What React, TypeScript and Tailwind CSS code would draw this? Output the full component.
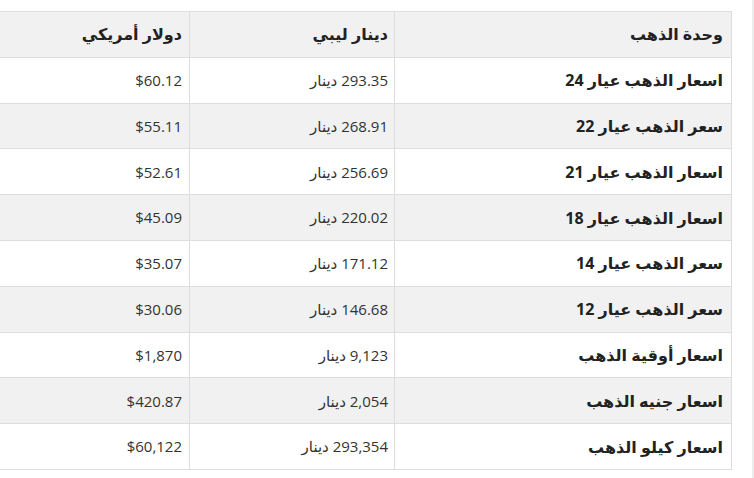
import React from "react";

interface Row {
  unit: string;
  lyd: string;
  usd: string;
}

const rows: Row[] = [
  { unit: "اسعار الذهب عيار 24", lyd: "293.35 دينار", usd: "$60.12" },
  { unit: "سعر الذهب عيار 22", lyd: "268.91 دينار", usd: "$55.11" },
  { unit: "اسعار الذهب عيار 21", lyd: "256.69 دينار", usd: "$52.61" },
  { unit: "اسعار الذهب عيار 18", lyd: "220.02 دينار", usd: "$45.09" },
  { unit: "سعر الذهب عيار 14", lyd: "171.12 دينار", usd: "$35.07" },
  { unit: "سعر الذهب عيار 12", lyd: "146.68 دينار", usd: "$30.06" },
  { unit: "اسعار أوقية الذهب", lyd: "9,123 دينار", usd: "$1,870" },
  { unit: "اسعار جنيه الذهب", lyd: "2,054 دينار", usd: "$420.87" },
  { unit: "اسعار كيلو الذهب", lyd: "293,354 دينار", usd: "$60,122" },
];

export default function App() {
  return (
    <div className="relative w-[754px] h-[478px] overflow-hidden bg-white font-['Open_Sans','DejaVu_Sans',sans-serif] text-[#222]">
      <div className="flex justify-end pt-[11px] pr-[22px]">
        <table dir="rtl" className="w-[742px] shrink-0 border-collapse text-[15px]">
          <thead>
            <tr className="h-[45.8px] bg-[#f1f1f1]">
              <th className="w-[337px] border border-[#dddddd] pr-[8px] text-right font-bold text-[16px]">وحدة الذهب</th>
              <th className="w-[205px] border border-[#dddddd] pr-[6px] text-right font-bold text-[16px]">دينار ليبي</th>
              <th className="border border-[#dddddd] pr-[7px] text-right font-bold text-[16px]">دولار أمريكي</th>
            </tr>
          </thead>
          <tbody>
            {rows.map((r, i) => (
              <tr key={r.unit} className={`h-[45.8px] ${i % 2 === 1 ? "bg-[#f1f1f1]" : "bg-white"}`}>
                <td className="border border-[#dddddd] pr-[8px] text-right font-bold text-[16px]">{r.unit}</td>
                <td className="border border-[#dddddd] pr-[6px] text-right text-[#333]">{r.lyd}</td>
                <td className="border border-[#dddddd] pr-[7px] text-right text-[#333]">{r.usd}</td>
              </tr>
            ))}
          </tbody>
        </table>
      </div>
      <div className="absolute right-0 top-0 h-full w-[2px] bg-[#ececec]" />
    </div>
  );
}
